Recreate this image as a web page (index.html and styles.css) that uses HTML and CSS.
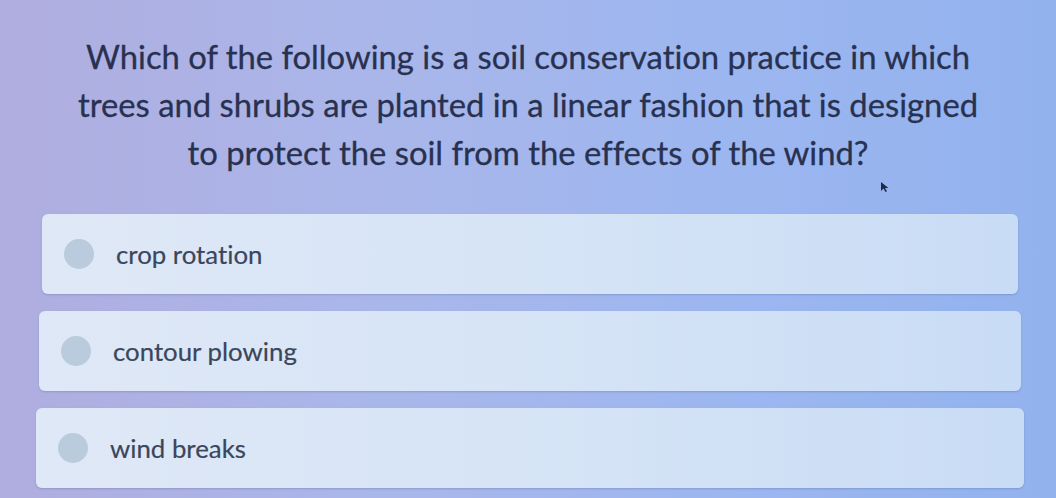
FILE: index.html
```html
<!DOCTYPE html>
<html lang="en">
<head>
<meta charset="utf-8">
<title>Quiz question</title>
<link rel="stylesheet" href="styles.css">
</head>
<body>
<main class="screen">
  <h1 class="question">Which of the following is a soil conservation practice in which<br>trees and shrubs are planted in a linear fashion that is designed<br>to protect the soil from the effects of the wind?</h1>
  <div class="options">
    <label class="option option-1"><span class="radio"></span><span class="label">crop rotation</span></label>
    <label class="option option-2"><span class="radio"></span><span class="label">contour plowing</span></label>
    <label class="option option-3"><span class="radio"></span><span class="label">wind breaks</span></label>
  </div>
  <svg class="cursor" width="10" height="12" viewBox="0 0 10 12"><path d="M1 1 L1 10 L3.5 7.5 L5.5 11 L7 10.2 L5 7 L8.5 7 Z" fill="#1f2a44"/></svg>
</main>
</body>
</html>
```
FILE: styles.css
```css
html, body {
  margin: 0;
  padding: 0;
}
body {
  width: 1056px;
  height: 498px;
  overflow: hidden;
  font-family: Lato, "Open Sans", sans-serif;
  font-variant-ligatures: no-common-ligatures;
  background: linear-gradient(90deg, #b0addf 0%, #aab6ea 35%, #9cb6f0 70%, #92b2ee 100%);
}
.screen {
  position: relative;
  height: 498px;
  padding-top: 33px;
  box-sizing: border-box;
}
.question {
  margin: 0;
  text-align: center;
  font-size: 32.8px;
  font-weight: 400;
  line-height: 48px;
  color: #283150;
  -webkit-text-stroke: 0.3px #283150;
}
.options {
  display: flex;
  flex-direction: column;
  gap: 17px;
  margin: 37px 32px 0 36px;
}
.option {
  display: flex;
  align-items: center;
  height: 80px;
  border-radius: 6px;
  background: linear-gradient(90deg, #dfe8f6 0%, #d6e4f6 50%, #c9dcf5 100%);
  box-shadow: 0 1px 2px rgba(60, 80, 140, 0.25);
  padding-left: 22px;
}
.option-1 {
  margin: 0 6px 0 6px;
}
.option-2 {
  margin: 0 3px 0 3px;
}
.radio {
  width: 30px;
  height: 30px;
  border-radius: 50%;
  background: #b9cbdc;
  flex: none;
}
.label {
  margin-left: 22px;
  font-size: 25.8px;
  color: #3a465c;
  -webkit-text-stroke: 0.2px #3a465c;
}
.cursor {
  position: absolute;
  left: 880px;
  top: 181px;
}
```
